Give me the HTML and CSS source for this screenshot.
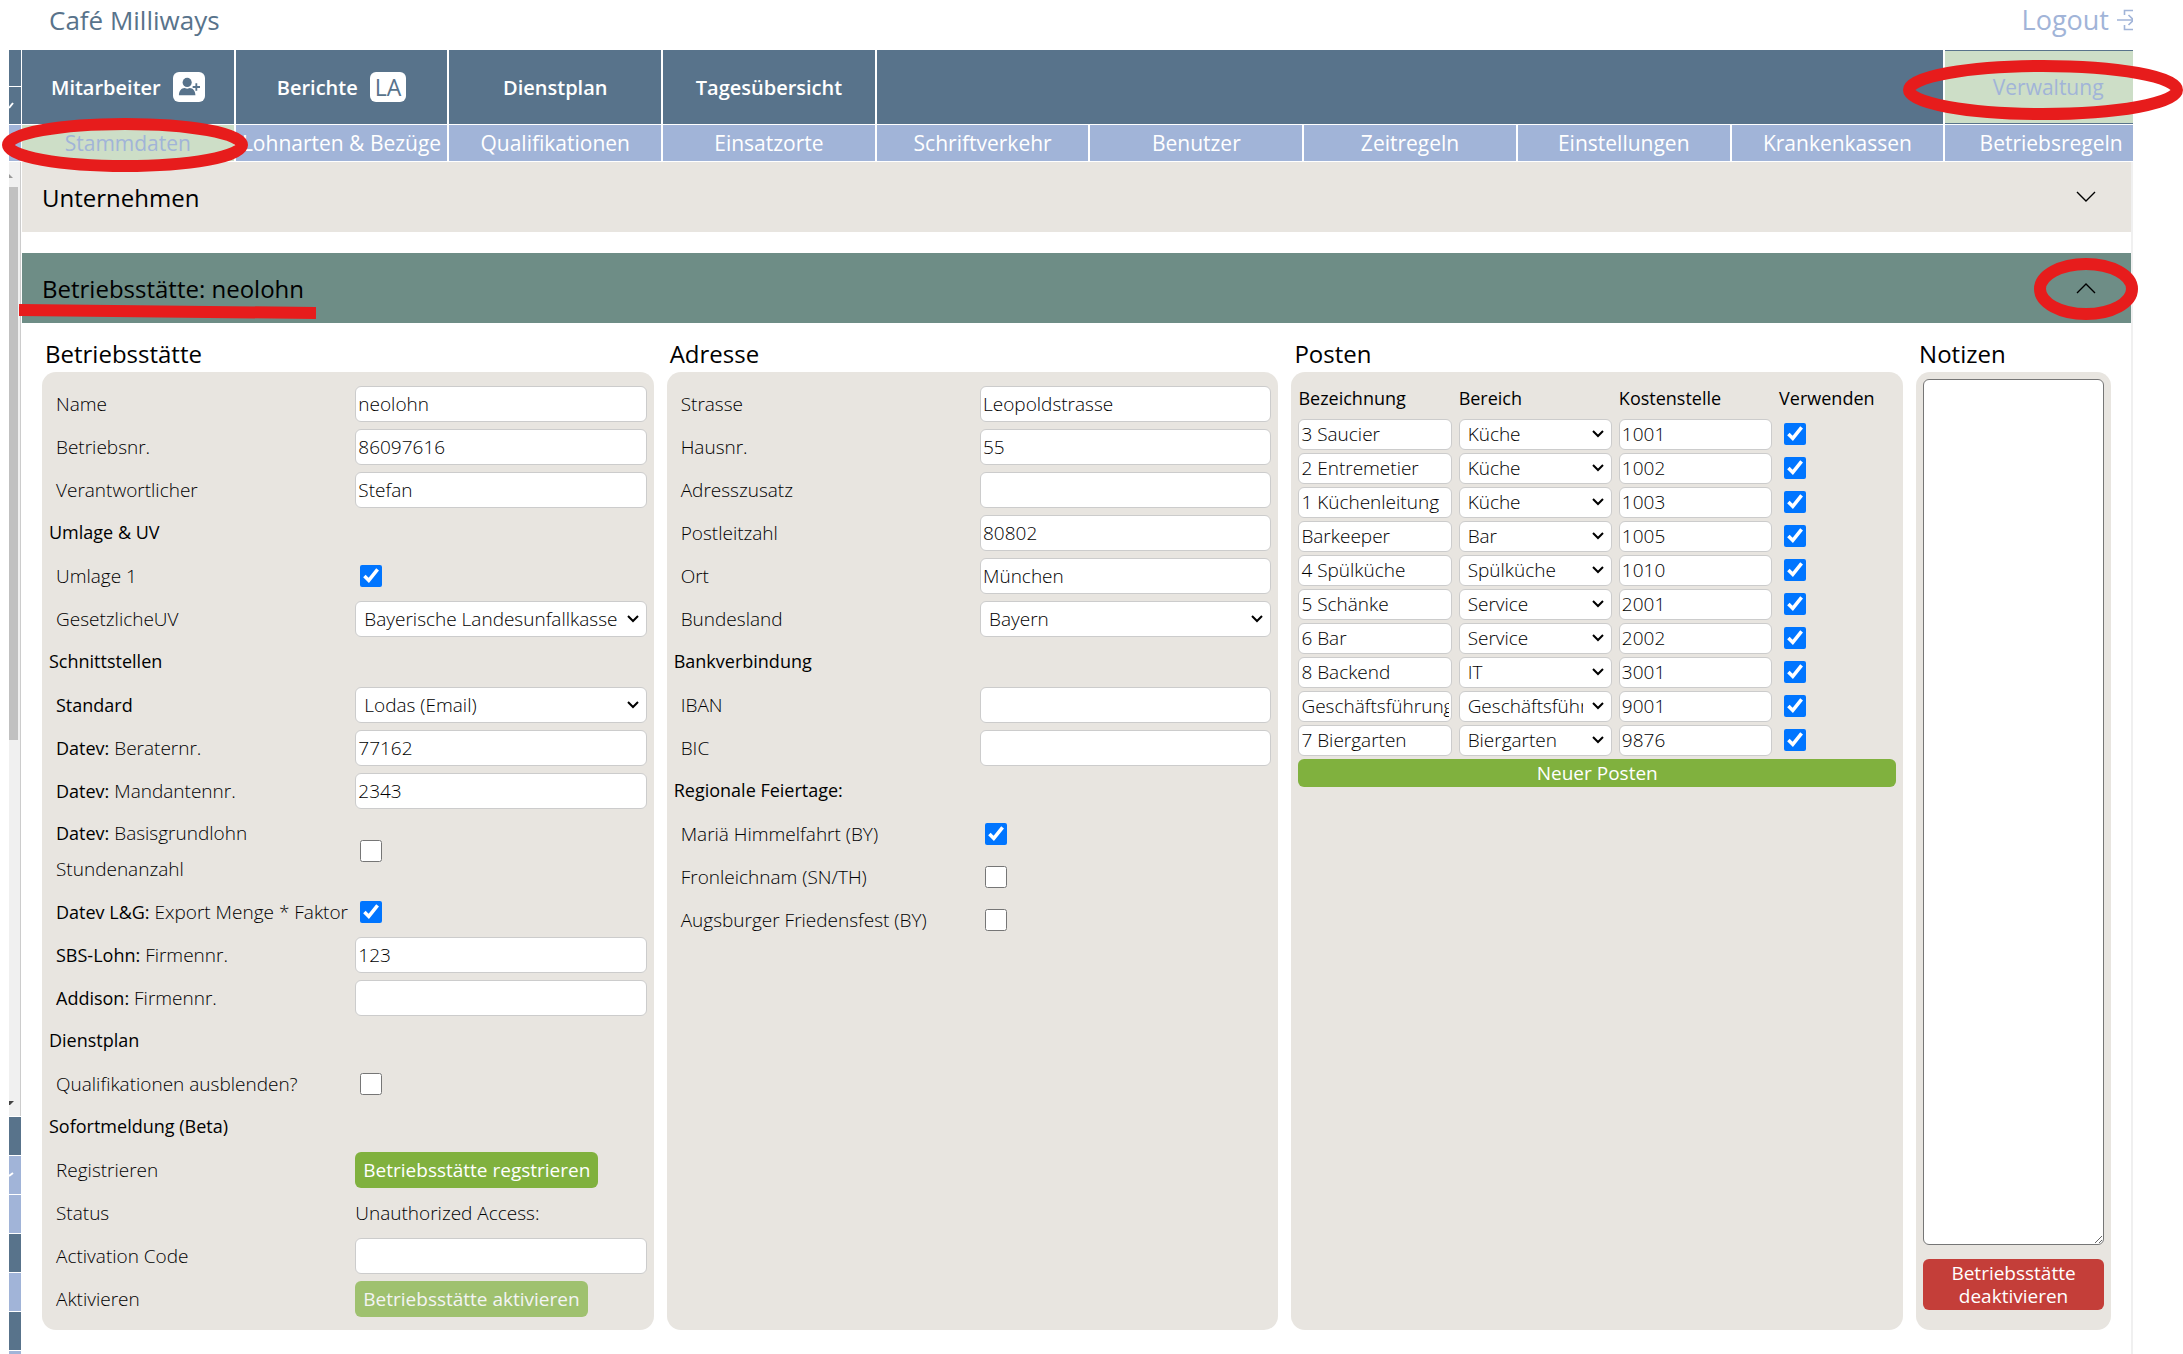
FILE: index.html
```html
<!DOCTYPE html>
<html lang="de">
<head>
    <meta charset="UTF-8">
    <meta name="viewport" content="width=device-width, initial-scale=1.0">
    <title>Café Milliways - Stammdaten</title>
    <link rel="stylesheet" href="styles.css">
</head>
<body>
    <div class="app">
        <header class="topbar">
            <span class="brand">Café Milliways</span>
            <a href="#" class="logout">Logout
                <svg class="logout-icon" viewBox="0 0 24 24"><path d="M7.5 7V2.5h16v19h-16V17M0 12h16M11.5 7l5 5-5 5"/></svg>
            </a>
        </header>

        <div class="layout">
            <!-- angeschnittene Seitenleiste -->
            <aside class="rail">
                <div class="rail-top"></div>
                <div class="rail-top rail-check"><svg viewBox="0 0 12 36"><path d="M0 21l4-5"/></svg></div>
                <div class="rail-sub"></div>
                <div class="rail-scroll">
                    <svg class="rail-arrow" viewBox="0 0 12 25"><path d="M0 12l4 4H0z"/></svg>
                    <div class="rail-thumb"></div>
                    <svg class="rail-arrow rail-down" viewBox="0 0 12 25"><path d="M0 10h5l-4 4H0z"/></svg>
                </div>
                <div class="rail-item"></div>
                <div class="rail-item light"><svg viewBox="0 0 12 38"><path d="M0 20l4-3"/></svg></div>
                <div class="rail-item light"></div>
                <div class="rail-item"></div>
                <div class="rail-item light"></div>
                <div class="rail-item"></div>
                <div class="rail-item light last"></div>
            </aside>

            <main class="main">
                <nav class="nav">
                    <a href="#">Mitarbeiter
                        <span class="badge"><svg viewBox="0 0 24 24"><circle cx="10" cy="7" r="5"/><path d="M1 21c0-5 3-8 6-8l3 1 3-1c3 0 6 3 6 8z"/><path d="M20 8v8M16 12h8" class="plus"/></svg></span>
                    </a>
                    <a href="#">Berichte <span class="badge">LA</span></a>
                    <a href="#">Dienstplan</a>
                    <a href="#">Tagesübersicht</a>
                    <span class="nav-fill"></span>
                    <a href="#" class="active">Verwaltung</a>
                </nav>
                <nav class="subnav">
                    <a href="#" class="active">Stammdaten</a>
                    <a href="#">Lohnarten &amp; Bezüge</a>
                    <a href="#">Qualifikationen</a>
                    <a href="#">Einsatzorte</a>
                    <a href="#">Schriftverkehr</a>
                    <a href="#">Benutzer</a>
                    <a href="#">Zeitregeln</a>
                    <a href="#">Einstellungen</a>
                    <a href="#">Krankenkassen</a>
                    <a href="#">Betriebsregeln</a>
                </nav>

                <div class="content">
                    <button type="button" class="accordion">Unternehmen
                        <svg viewBox="0 0 20 12"><path d="M1 1l9 9 9-9"/></svg>
                    </button>
                    <button type="button" class="accordion open">Betriebsstätte: neolohn
                        <svg viewBox="0 0 20 12"><path d="M1 11l9-9 9 9"/></svg>
                    </button>

                    <form class="columns">
                        <section class="column">
                            <h2>Betriebsstätte</h2>
                            <div class="panel">
                                <div class="row"><label for="name">Name</label><input type="text" id="name" value="neolohn"></div>
                                <div class="row"><label for="betriebsnr">Betriebsnr.</label><input type="text" id="betriebsnr" value="86097616"></div>
                                <div class="row"><label for="verantwortlicher">Verantwortlicher</label><input type="text" id="verantwortlicher" value="Stefan"></div>
                                <h3>Umlage &amp; UV</h3>
                                <div class="row"><label for="umlage">Umlage 1</label><input type="checkbox" id="umlage" checked></div>
                                <div class="row"><label for="uv">GesetzlicheUV</label><select id="uv"><option>Bayerische Landesunfallkasse</option></select></div>
                                <h3>Schnittstellen</h3>
                                <div class="row"><label for="standard"><b>Standard</b></label><select id="standard"><option>Lodas (Email)</option></select></div>
                                <div class="row"><label for="berater"><b>Datev:</b> Beraternr.</label><input type="text" id="berater" value="77162"></div>
                                <div class="row"><label for="mandant"><b>Datev:</b> Mandantennr.</label><input type="text" id="mandant" value="2343"></div>
                                <div class="row double"><label for="basis"><b>Datev:</b> Basisgrundlohn<br>Stundenanzahl</label><input type="checkbox" id="basis"></div>
                                <div class="row"><label for="export"><b>Datev L&amp;G:</b> Export Menge * Faktor</label><input type="checkbox" id="export" checked></div>
                                <div class="row"><label for="sbs"><b>SBS-Lohn:</b> Firmennr.</label><input type="text" id="sbs" value="123"></div>
                                <div class="row"><label for="addison"><b>Addison:</b> Firmennr.</label><input type="text" id="addison"></div>
                                <h3>Dienstplan</h3>
                                <div class="row"><label for="quali">Qualifikationen ausblenden?</label><input type="checkbox" id="quali"></div>
                                <h3>Sofortmeldung (Beta)</h3>
                                <div class="row"><label for="registrieren">Registrieren</label><button type="button" id="registrieren" class="btn">Betriebsstätte regstrieren</button></div>
                                <div class="row"><span class="label">Status</span><span>Unauthorized Access:</span></div>
                                <div class="row"><label for="code">Activation Code</label><input type="text" id="code"></div>
                                <div class="row"><label for="aktivieren">Aktivieren</label><button type="button" id="aktivieren" class="btn" disabled>Betriebsstätte aktivieren</button></div>
                            </div>
                        </section>

                        <section class="column">
                            <h2>Adresse</h2>
                            <div class="panel">
                                <div class="row"><label for="strasse">Strasse</label><input type="text" id="strasse" value="Leopoldstrasse"></div>
                                <div class="row"><label for="hausnr">Hausnr.</label><input type="text" id="hausnr" value="55"></div>
                                <div class="row"><label for="zusatz">Adresszusatz</label><input type="text" id="zusatz"></div>
                                <div class="row"><label for="plz">Postleitzahl</label><input type="text" id="plz" value="80802"></div>
                                <div class="row"><label for="ort">Ort</label><input type="text" id="ort" value="München"></div>
                                <div class="row"><label for="land">Bundesland</label><select id="land"><option>Bayern</option></select></div>
                                <h3>Bankverbindung</h3>
                                <div class="row"><label for="iban">IBAN</label><input type="text" id="iban"></div>
                                <div class="row"><label for="bic">BIC</label><input type="text" id="bic"></div>
                                <h3>Regionale Feiertage:</h3>
                                <div class="row"><label for="maria">Mariä Himmelfahrt (BY)</label><input type="checkbox" id="maria" checked></div>
                                <div class="row"><label for="fron">Fronleichnam (SN/TH)</label><input type="checkbox" id="fron"></div>
                                <div class="row"><label for="augsburg">Augsburger Friedensfest (BY)</label><input type="checkbox" id="augsburg"></div>
                            </div>
                        </section>

                        <section class="column">
                            <h2>Posten</h2>
                            <div class="panel">
                                <table class="posten">
                                    <thead>
                                        <tr><th>Bezeichnung</th><th>Bereich</th><th>Kostenstelle</th><th>Verwenden</th></tr>
                                    </thead>
                                    <tbody>
                                        <tr><td><input type="text" aria-label="Bezeichnung" value="3 Saucier"></td><td><select aria-label="Bereich"><option>Küche</option></select></td><td><input type="text" aria-label="Kostenstelle" value="1001"></td><td><input type="checkbox" aria-label="Verwenden" checked></td></tr>
                                        <tr><td><input type="text" aria-label="Bezeichnung" value="2 Entremetier"></td><td><select aria-label="Bereich"><option>Küche</option></select></td><td><input type="text" aria-label="Kostenstelle" value="1002"></td><td><input type="checkbox" aria-label="Verwenden" checked></td></tr>
                                        <tr><td><input type="text" aria-label="Bezeichnung" value="1 Küchenleitung"></td><td><select aria-label="Bereich"><option>Küche</option></select></td><td><input type="text" aria-label="Kostenstelle" value="1003"></td><td><input type="checkbox" aria-label="Verwenden" checked></td></tr>
                                        <tr><td><input type="text" aria-label="Bezeichnung" value="Barkeeper"></td><td><select aria-label="Bereich"><option>Bar</option></select></td><td><input type="text" aria-label="Kostenstelle" value="1005"></td><td><input type="checkbox" aria-label="Verwenden" checked></td></tr>
                                        <tr><td><input type="text" aria-label="Bezeichnung" value="4 Spülküche"></td><td><select aria-label="Bereich"><option>Spülküche</option></select></td><td><input type="text" aria-label="Kostenstelle" value="1010"></td><td><input type="checkbox" aria-label="Verwenden" checked></td></tr>
                                        <tr><td><input type="text" aria-label="Bezeichnung" value="5 Schänke"></td><td><select aria-label="Bereich"><option>Service</option></select></td><td><input type="text" aria-label="Kostenstelle" value="2001"></td><td><input type="checkbox" aria-label="Verwenden" checked></td></tr>
                                        <tr><td><input type="text" aria-label="Bezeichnung" value="6 Bar"></td><td><select aria-label="Bereich"><option>Service</option></select></td><td><input type="text" aria-label="Kostenstelle" value="2002"></td><td><input type="checkbox" aria-label="Verwenden" checked></td></tr>
                                        <tr><td><input type="text" aria-label="Bezeichnung" value="8 Backend"></td><td><select aria-label="Bereich"><option>IT</option></select></td><td><input type="text" aria-label="Kostenstelle" value="3001"></td><td><input type="checkbox" aria-label="Verwenden" checked></td></tr>
                                        <tr><td><input type="text" aria-label="Bezeichnung" value="Geschäftsführung"></td><td><select aria-label="Bereich"><option>Geschäftsführung</option></select></td><td><input type="text" aria-label="Kostenstelle" value="9001"></td><td><input type="checkbox" aria-label="Verwenden" checked></td></tr>
                                        <tr><td><input type="text" aria-label="Bezeichnung" value="7 Biergarten"></td><td><select aria-label="Bereich"><option>Biergarten</option></select></td><td><input type="text" aria-label="Kostenstelle" value="9876"></td><td><input type="checkbox" aria-label="Verwenden" checked></td></tr>
                                    </tbody>
                                </table>
                                <button type="button" class="btn btn-wide">Neuer Posten</button>
                            </div>
                        </section>

                        <section class="column">
                            <h2><label for="notizen">Notizen</label></h2>
                            <div class="panel notes">
                                <textarea id="notizen"></textarea>
                                <button type="button" class="btn btn-danger">Betriebsstätte deaktivieren</button>
                            </div>
                        </section>
                    </form>
                </div>
            </main>
        </div>
    </div>

    <!-- rote Markierungen -->
    <svg class="mark mark-stammdaten" viewBox="0 0 248 56"><ellipse cx="124" cy="28" rx="117" ry="21"/></svg>
    <svg class="mark mark-verwaltung" viewBox="0 0 280 60"><ellipse cx="140" cy="30" rx="134" ry="24"/></svg>
    <svg class="mark mark-chevron" viewBox="0 0 104 62"><ellipse cx="52" cy="31" rx="46" ry="25"/></svg>
    <svg class="mark mark-line" viewBox="0 0 297 16"><path d="M0 6l297 3"/></svg>
</body>
</html>
```

FILE: styles.css
```css
* {
    box-sizing: border-box;
}
body {
    position: relative;
    margin: 0;
    background: white;
    color: #000;
    font-family: "Open Sans", "Noto Sans", sans-serif;
    font-size: 19px;
    font-weight: 300;
    overflow-x: hidden;
}
a {
    text-decoration: none;
}
input, select, textarea, button {
    font: inherit;
    color: inherit;
}
.app {
    margin: 0 50px 0 9px;
    overflow: hidden;
}
.topbar {
    display: flex;
    justify-content: space-between;
    height: 50px;
    padding-left: 40px;
    line-height: 40px;
    font-size: 26px;
    font-weight: 400;
}
.brand {
    color: #58738b;
}
.logout {
    display: flex;
    align-items: center;
    gap: 8px;
    height: 40px;
    margin-right: -8px;
    color: #a1b4d8;
    font-size: 27px;
}
.logout-icon {
    width: 24px;
    height: 24px;
    fill: none;
    stroke: #a1b4d8;
    stroke-width: 1.6;
}
.layout {
    display: flex;
}

/* Seitenleiste */
.rail {
    display: flex;
    flex-direction: column;
    width: 12px;
    margin-right: 1px;
    gap: 1px;
}
.rail svg {
    display: block;
    width: 12px;
    fill: none;
    stroke: white;
    stroke-width: 2;
}
.rail-top {
    height: 36px;
    background: #58738b;
}
.rail-check {
    height: 37px;
}
.rail-sub {
    height: 36px;
    background: #a1b4d8;
}
.rail-scroll {
    flex: 1;
    display: flex;
    flex-direction: column;
    background: #f0f0f0;
    border-right: 1px solid #ccc;
}
.rail .rail-arrow {
    height: 25px;
    fill: #999;
    stroke: none;
}
.rail .rail-down {
    margin-top: auto;
    fill: #444;
}
.rail-thumb {
    width: 9px;
    height: 58%;
    background: #c1c1c1;
}
.rail-item {
    height: 38px;
    background: #58738b;
}
.rail-item.light {
    background: #a1b4d8;
}
.rail-item.last {
    height: 3px;
}

/* Navigation */
.main {
    flex: 1;
    min-width: 0;
}
.nav, .subnav {
    display: grid;
    grid-template-columns: repeat(10, minmax(0, 1fr));
    column-gap: 2px;
    width: calc(100% + 24px);
    margin-bottom: 1px;
    text-align: center;
}
.nav a, .subnav a {
    display: flex;
    align-items: center;
    justify-content: center;
    gap: 12px;
    color: white;
    white-space: nowrap;
}
.nav a {
    height: 74px;
    background: #58738b;
    font-size: 20px;
    font-weight: 600;
}
.nav-fill {
    grid-column: span 5;
    background: #58738b;
}
.subnav a {
    height: 36px;
    background: #a1b4d8;
    font-size: 21px;
    font-weight: 400;
}
.nav a.active, .subnav a.active {
    background: #cddec7;
    color: #a1b4d8;
}
.nav a.active {
    padding-right: 6px;
    border: solid #58738b;
    border-width: 1px 0;
    font-size: 21px;
    font-weight: 500;
}
.badge {
    display: flex;
    align-items: center;
    height: 30px;
    padding: 0 5px;
    border-radius: 6px;
    background: white;
    color: #58738b;
    font-size: 23px;
    font-weight: 400;
}
.badge svg {
    width: 22px;
    height: 22px;
    fill: #58738b;
}
.badge .plus {
    stroke: #58738b;
    stroke-width: 2;
}

/* Inhalt */
.content {
    padding-bottom: 24px;
    border-right: 2px solid #f0f0f0;
}
.accordion {
    display: flex;
    align-items: center;
    justify-content: space-between;
    width: 100%;
    height: 70px;
    margin-bottom: 21px;
    padding: 0 35px 0 20px;
    border: none;
    background: #e8e5e0;
    color: black;
    font-size: 24px;
    font-weight: 400;
}
.accordion.open {
    margin-bottom: 0;
    background: #6e8d86;
}
.accordion svg {
    width: 20px;
    height: 12px;
    fill: none;
    stroke: black;
    stroke-width: 1.4;
}
.columns {
    display: grid;
    grid-template-columns: 612fr 612fr 612fr 195fr;
    gap: 13px;
    padding: 0 20px;
}
.column {
    display: flex;
    flex-direction: column;
    min-width: 0;
}
h2 {
    margin: 0;
    padding: 6px 0 0 3px;
    height: 49px;
    line-height: 50px;
    color: black;
    font-size: 24px;
    font-weight: 400;
}
.panel {
    flex: 1;
    padding: 10px 7px;
    border-radius: 14px;
    background: #e8e5e0;
}
h3 {
    margin: 0;
    height: 43px;
    line-height: 43px;
    color: black;
    font-size: 18px;
    font-weight: 500;
}
b {
    color: black;
    font-size: 18px;
    font-weight: 500;
}
.row {
    display: grid;
    grid-template-columns: 307fr 292fr;
    align-items: center;
    height: 43px;
}
.row label, .row .label {
    padding-left: 7px;
    line-height: 36px;
    white-space: nowrap;
}
.row.double {
    height: 78px;
}
input[type="text"], select {
    width: 100%;
    height: 36px;
    padding: 0 2px;
    border: 1px solid #ccc;
    border-radius: 6px;
    background: white;
}
select {
    padding: 0 28px 0 8px;
    appearance: none;
    background: white url("data:image/svg+xml,%3Csvg xmlns='http://www.w3.org/2000/svg' viewBox='0 0 14 10'%3E%3Cpath d='M2 2l5 5 5-5' fill='none' stroke='black' stroke-width='2'/%3E%3C/svg%3E") no-repeat right 6px center / 14px 10px;
}
input[type="checkbox"] {
    width: 22px;
    height: 22px;
    margin: 0 0 0 5px;
    accent-color: #0075ff;
}
.btn {
    justify-self: start;
    height: 36px;
    padding: 0 8px;
    border: none;
    border-radius: 6px;
    background: #80b13e;
    color: white;
    font-size: 19px;
    font-weight: 400;
    white-space: nowrap;
}
.btn:disabled {
    background: #9fc16f;
    color: #f4f4f4;
}
.posten {
    width: 100%;
    table-layout: fixed;
    border-collapse: collapse;
}
.posten th {
    height: 35px;
    padding: 0 0 4px;
    color: black;
    font-size: 18px;
    font-weight: 500;
    text-align: left;
}
.posten th:last-child {
    width: 117px;
}
.posten td {
    height: 34px;
    padding: 0 7px 0 0;
    line-height: 0;
}
.posten input[type="text"], .posten select {
    height: 31px;
    line-height: 24px;
}
.btn-wide {
    width: 100%;
    height: 28px;
    margin-top: 2px;
}
.notes {
    display: flex;
    flex-direction: column;
    gap: 14px;
    padding: 7px 7px 20px;
}
.notes textarea {
    flex: 1;
    width: 100%;
    border: 1px solid #767676;
    border-radius: 6px;
}
.btn-danger {
    width: 100%;
    height: 51px;
    background: #c43e39;
    line-height: 23px;
    white-space: normal;
}

/* Markierungen */
.mark {
    position: absolute;
    fill: none;
    stroke: #e71c1c;
    stroke-width: 12;
    pointer-events: none;
}
.mark-stammdaten {
    top: 117px;
    left: 1px;
    width: 248px;
    height: 56px;
}
.mark-verwaltung {
    top: 60px;
    right: 0;
    width: 280px;
    height: 60px;
}
.mark-chevron {
    top: 258px;
    right: 45px;
    width: 104px;
    height: 62px;
}
.mark-line {
    top: 304px;
    left: 19px;
    width: 297px;
    height: 16px;
}
```
